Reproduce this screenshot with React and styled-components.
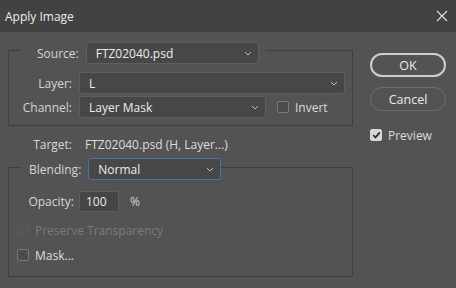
import React from 'react'
import styled, { createGlobalStyle } from 'styled-components'

const Global = createGlobalStyle`
  html, body {
    margin: 0;
    padding: 0;
    background: #535353;
  }
  body {
    font-family: "Open Sans", "Noto Sans", Arial, sans-serif;
    font-size: 12px;
    color: #d8d8d8;
  }
`

const Dialog = styled.div`
  width: 456px;
  height: 288px;
  background: #535353;
  overflow: hidden;
`

const TitleBar = styled.div`
  height: 32px;
  background: #424242;
  display: flex;
  align-items: center;
  justify-content: space-between;
  padding: 0 8px 0 5px;
  box-sizing: border-box;
  color: #ececec;
  font-size: 12px;
`

const CloseBtn = styled.div`
  width: 12px;
  height: 12px;
  display: flex;
`

const Body = styled.div`
  display: flex;
  padding: 4px 10px 0 8px;
`

const LeftCol = styled.div`
  width: 345px;
  display: flex;
  flex-direction: column;
`

const RightCol = styled.div`
  width: 76px;
  margin-left: 17px;
  padding-top: 17px;
  display: flex;
  flex-direction: column;
`

const Group = styled.fieldset`
  margin: 0;
  border: 1px solid #3f3f3f;
  padding: ${p => p.$pad};
  min-width: 0;
`

const Legend = styled.legend`
  display: flex;
  align-items: center;
  gap: 7px;
  padding: ${p => p.$pad};
  margin-left: ${p => p.$offset}px;
`

const Label = styled.span`
  color: #d6d6d6;
  white-space: nowrap;
  width: ${p => (p.$w ? `${p.$w}px` : 'auto')};
  text-align: ${p => (p.$w ? 'right' : 'left')};
  flex-shrink: 0;
`

const FieldGrid = styled.div`
  display: grid;
  grid-template-columns: 63px 1fr;
  column-gap: 7px;
  row-gap: 2px;
  align-items: center;
`

const SelectBox = styled.div`
  box-sizing: border-box;
  height: 22px;
  width: ${p => (p.$w ? `${p.$w}px` : '100%')};
  background: #474747;
  border: 1px solid ${p => (p.$focus ? '#4a74a6' : '#5f5f5f')};
  border-radius: 3px;
  display: flex;
  align-items: center;
  justify-content: space-between;
  padding: 0 6px 0 9px;
  color: #ececec;
`

const Chevron = () => (
  <svg width="8" height="5" viewBox="0 0 8 5">
    <path d="M1 1 L4 4 L7 1" fill="none" stroke="#bdbdbd" strokeWidth="1" />
  </svg>
)

const Select = ({ value, w, focus }) => (
  <SelectBox $w={w} $focus={focus}>
    <span>{value}</span>
    <Chevron />
  </SelectBox>
)

const InlineRow = styled.div`
  display: flex;
  align-items: center;
`

const Check = styled.span`
  box-sizing: border-box;
  width: 12px;
  height: 12px;
  border-radius: 2px;
  flex-shrink: 0;
  border: 1px solid ${p => (p.$checked ? '#d6d6d6' : p.$disabled ? '#5c5c5c' : '#7a7a7a')};
  background: ${p => (p.$checked ? '#d6d6d6' : p.$disabled ? '#545454' : '#4c4c4c')};
  display: flex;
  align-items: center;
  justify-content: center;
`

const CheckRow = styled.label`
  display: flex;
  align-items: center;
  gap: 6px;
  height: 20px;
  margin: ${p => p.$m || '0'};
  color: ${p => (p.$disabled ? '#7b7b7b' : '#dcdcdc')};
`

const CheckBox = ({ label, checked, disabled, m }) => (
  <CheckRow $disabled={disabled} $m={m}>
    <Check $checked={checked} $disabled={disabled}>
      {checked && (
        <svg width="9" height="8" viewBox="0 0 9 8">
          <path d="M1.2 4.2 L3.5 6.4 L7.8 1.4" fill="none" stroke="#2e2e2e" strokeWidth="1.7" />
        </svg>
      )}
    </Check>
    {label}
  </CheckRow>
)

const TargetRow = styled.div`
  display: flex;
  align-items: center;
  height: 20px;
  margin: 8px 0 0;
  gap: 13px;
`

const Value = styled.span`
  color: #dedede;
`

const BlendCol = styled.div`
  display: flex;
  flex-direction: column;
`

const OpacityRow = styled.div`
  display: flex;
  align-items: center;
  height: 21px;
  margin-bottom: 8px;
  gap: 5px;
`

const NumInput = styled.div`
  box-sizing: border-box;
  width: 40px;
  height: 21px;
  background: #454545;
  border: 1px solid #5e5e5e;
  border-radius: 2px;
  padding-left: 6px;
  display: flex;
  align-items: center;
  color: #ececec;
`

const Unit = styled.span`
  margin-left: 6px;
  color: #d6d6d6;
`

const Button = styled.div`
  box-sizing: border-box;
  height: 24px;
  border-radius: 12px;
  border: ${p => (p.$primary ? '2px solid #cfcfcf' : '1px solid #6e6e6e')};
  display: flex;
  align-items: center;
  justify-content: center;
  color: #eaeaea;
  font-size: 12.5px;
  margin-bottom: 10px;
`

export default function App() {
  return (
    <>
      <Global />
      <Dialog>
        <TitleBar>
          <span>Apply Image</span>
          <CloseBtn>
            <svg width="12" height="12" viewBox="0 0 12 12">
              <path d="M1 1 L11 11 M11 1 L1 11" stroke="#e2e2e2" strokeWidth="1.1" />
            </svg>
          </CloseBtn>
        </TitleBar>
        <Body>
          <LeftCol>
            <Group $pad="8px 7px 7px 0">
              <Legend $pad="6px 7px 0 17px" $offset={11}>
                <Label>Source:</Label>
                <Select value="FTZ02040.psd" w={173} />
              </Legend>
              <FieldGrid>
                <Label $w={63}>Layer:</Label>
                <Select value="L" />
                <Label $w={63}>Channel:</Label>
                <InlineRow>
                  <Select value="Layer Mask" w={187} />
                  <CheckBox label="Invert" m="0 0 0 11px" />
                </InlineRow>
              </FieldGrid>
            </Group>
            <TargetRow>
              <Label $w={64}>Target:</Label>
              <Value>FTZ02040.psd (H, Layer...)</Value>
            </TargetRow>
            <Group $pad="11px 0 11px 0">
              <Legend $pad="4px 0 0 7px" $offset={13}>
                <Label>Blending:</Label>
                <Select value="Normal" w={133} focus />
              </Legend>
              <BlendCol>
                <OpacityRow>
                  <Label $w={65}>Opacity:</Label>
                  <NumInput>100</NumInput>
                  <Unit>%</Unit>
                </OpacityRow>
                <CheckBox label="Preserve Transparency" disabled m="0 0 0 8px" />
                <CheckBox label="Mask..." m="5px 0 0 8px" />
              </BlendCol>
            </Group>
          </LeftCol>
          <RightCol>
            <Button $primary>OK</Button>
            <Button>Cancel</Button>
            <CheckBox label="Preview" checked m="4px 0 0 0" />
          </RightCol>
        </Body>
      </Dialog>
    </>
  )
}
